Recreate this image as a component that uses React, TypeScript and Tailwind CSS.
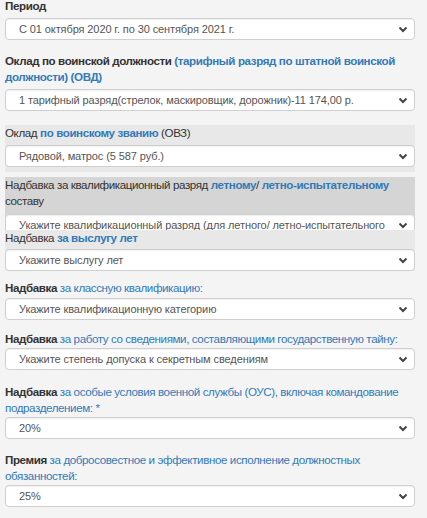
import React from "react";

const Chevron = () => (
  <svg width="10" height="7" viewBox="0 0 10 7" className="shrink-0">
    <polyline points="1.5,1.5 5,5 8.5,1.5" fill="none" stroke="#444" strokeWidth="2" />
  </svg>
);

const Select = ({ text, className = "" }: { text: string; className?: string }) => (
  <div
    className={
      "h-[22px] shrink-0 flex items-center bg-white border border-[#cfcfcf] rounded-[4px] shadow-[inset_0_1px_1px_rgba(0,0,0,0.06)] pl-[13px] pr-[6px] " +
      className
    }
  >
    <div className="flex-1 overflow-hidden whitespace-nowrap text-[11px] tracking-[-0.1px] text-[#555] leading-[20px] mr-[10px]">{text}</div>
    <Chevron />
  </div>
);

const B = ({ children }: { children: React.ReactNode }) => <span className="text-[#337ab7]">{children}</span>;

export default function App() {
  return (
    <div
      className="min-h-[518px] w-[427px] bg-[#f4f4f4] pl-[5px] pr-[12px] overflow-hidden text-[11.6px] tracking-[-0.4px] leading-[16px] text-[#333]"
      style={{ fontFamily: '"Liberation Sans", Arial, sans-serif' }}
    >
      <div className="flex flex-col mt-[-2px]">
        <div className="font-bold mb-[4px]">Период</div>
        <Select text="С 01 октября 2020 г. по 30 сентября 2021 г." />

        <div className="font-bold mt-[13px] mb-[4px]">
          Оклад по воинской должности <B>(тарифный разряд по штатной воинской должности) (ОВД)</B>
        </div>
        <Select text="1 тарифный разряд(стрелок, маскировщик, дорожник)-11 174,00 р." />

        <div className="mt-[14px] bg-[#e8e8e8] pb-[5px] flex flex-col">
          <div className="mb-[4px]">
            Оклад <B><b>по воинскому званию</b></B> (ОВЗ)
          </div>
          <Select text="Рядовой, матрос (5 587 руб.)" />
        </div>

        <div className="mt-[5px] bg-[#d5d5d5] h-[53px] overflow-hidden flex flex-col">
          <div className="mb-[5px]">
            Надбавка за квалификационный разряд <B><b>летному</b></B>/ <B><b>летно-испытательному</b></B> составу
          </div>
          <Select text="Укажите квалификационный разряд (для летного/ летно-испытательного состава)" />
        </div>

        <div className="bg-[#e8e8e8] flex flex-col">
          <div className="mb-[3px]">
            Надбавка <B><b>за выслугу лет</b></B>
          </div>
          <Select text="Укажите выслугу лет" />
        </div>

        <div className="mt-[9px] mb-[2px]">
          <b>Надбавка</b> <B>за классную квалификацию:</B>
        </div>
        <Select text="Укажите квалификационную категорию" />

        <div className="mt-[11px] mb-[1px]">
          <b>Надбавка</b> <B>за работу со сведениями, составляющими государственную тайну:</B>
        </div>
        <Select text="Укажите степень допуска к секретным сведениям" />

        <div className="mt-[14px] mb-[1px]">
          <b>Надбавка</b> <B>за особые условия военной службы (ОУС), включая командование подразделением: *</B>
        </div>
        <Select text="20%" />

        <div className="mt-[13px] mb-[1px]">
          <b>Премия</b> <B>за добросовестное и эффективное исполнение должностных обязанностей:</B>
        </div>
        <Select text="25%" />
      </div>
    </div>
  );
}
